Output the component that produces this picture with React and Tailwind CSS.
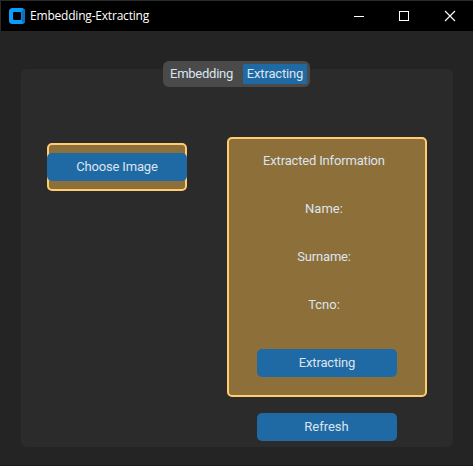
function TitleBar() {
  return (
    <header className="flex h-[31px] items-center border-t border-l border-[#2b2b2b] bg-black text-white">
      <svg className="ml-2 h-4 w-4 shrink-0" viewBox="0 0 16 16">
        <rect width="16" height="16" rx="3.5" fill="#0a9cff" />
        <path d="M12.5 3L15 1Q16 2 16 3.5V12.5Q16 14 15 15L12.5 13Z" fill="#0870c0" />
        <rect x="4" y="4" width="8" height="8" rx="1" fill="#000" />
      </svg>
      <h1 className="ml-[5px] w-[120px] whitespace-nowrap font-['Open_Sans',sans-serif] text-[12px] leading-4 tracking-[-0.2px]">
        Embedding-Extracting
      </h1>
      <svg className="ml-auto mr-[17px] h-3 w-[103px] shrink-0" viewBox="0 0 103 12" fill="none" stroke="#fff">
        <path d="M1 6.5H11" />
        <rect x="46.5" y="1.5" width="9" height="9" />
        <path d="M92 1L102 11M102 1L92 11" strokeWidth="1.1" />
      </svg>
    </header>
  );
}

function Button({ children, className = "" }) {
  return (
    <button className={`flex h-7 w-[140px] shrink-0 items-center justify-center rounded-[5px] bg-[#1f6aa5] ${className}`}>
      {children}
    </button>
  );
}

const fields = [
  { label: "Extracted Information", spacing: "" },
  { label: "Name:", spacing: "tracking-normal" },
  { label: "Surname:", spacing: "" },
  { label: "Tcno:", spacing: "tracking-normal" },
];

export default function App() {
  return (
    <div className="flex h-[466px] w-[473px] flex-col overflow-hidden border-b border-[#1e161b] bg-[#242424] font-[Roboto,sans-serif] text-[13px] leading-4 tracking-[-0.17px] text-[#dce4ee]">
      <TitleBar />
      <main className="mt-[38px] ml-[21px] h-[378px] w-[432px] rounded-md bg-[#2b2b2b]">
        <nav className="-mt-2 ml-[142px] flex h-[26px] w-[147px] items-start rounded-md bg-[#4a4a4a] pt-[3px]">
          <button className="flex h-5 w-20 items-center pl-[7px] whitespace-nowrap tracking-[-0.25px]">Embedding</button>
          <button className="flex h-5 w-16 items-center justify-center whitespace-nowrap rounded-[1px] bg-[#1f6aa5]">Extracting</button>
        </nav>
        <div className="mt-[50px] ml-[26px] flex items-start gap-10">
          <section className="mt-1.5 flex h-12 w-[140px] items-center rounded-[5px] border-2 border-[#ffcc70] bg-[#8d6f3a]">
            <Button className="-mx-0.5">Choose Image</Button>
          </section>
          <div className="flex w-[200px] flex-col items-center">
            <section className="flex h-[260px] w-full flex-col items-center gap-5 rounded-[5px] border-2 border-[#ffcc70] bg-[#8d6f3a] pt-2">
              {fields.map(({ label, spacing }) => (
                <p key={label} className={`flex h-7 items-center pr-1.5 ${spacing}`}>{label}</p>
              ))}
              <Button className="mt-2.5">Extracting</Button>
            </section>
            <Button className="mt-4 pr-px tracking-normal">Refresh</Button>
          </div>
        </div>
      </main>
    </div>
  );
}
